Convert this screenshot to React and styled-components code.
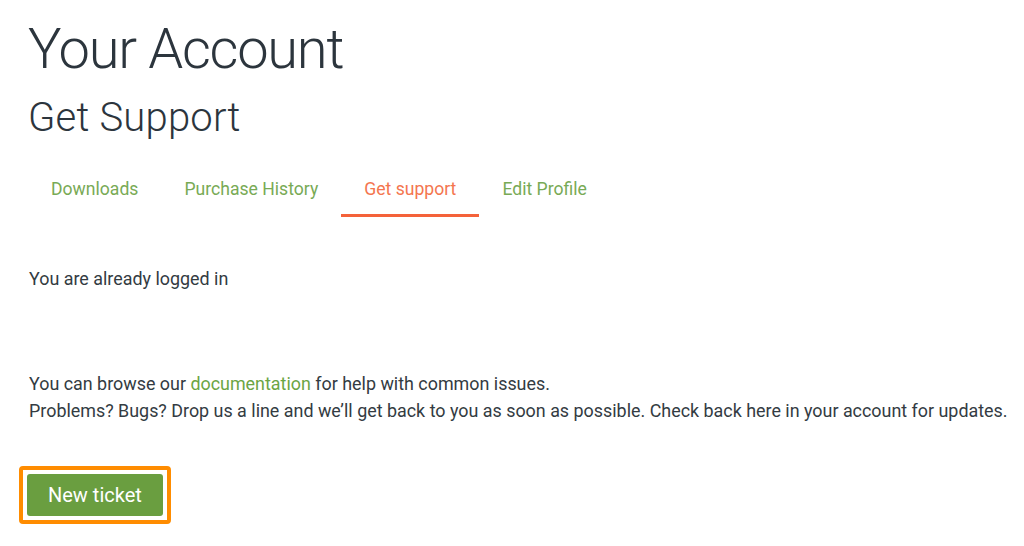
import styled, { createGlobalStyle } from "styled-components";

const GlobalStyle = createGlobalStyle`
    body {
        margin: 0;
        background: #ffffff;
        font-family: Roboto, "Liberation Sans", sans-serif;
        color: #333b42;
    }
`;

const tabs = ["Downloads", "Purchase History", "Get support", "Edit Profile"];

export default function App() {
    return (
        <>
            <GlobalStyle />
            <Page>
                <Title>Your Account</Title>
                <Subtitle>Get Support</Subtitle>
                <TabBar>
                    {tabs.map((tab) => (
                        <Tab key={tab} $active={tab === "Get support"}>
                            {tab}
                        </Tab>
                    ))}
                </TabBar>
                <Notice>You are already logged in</Notice>
                <Text>
                    You can browse our <Link href="#">documentation</Link> for
                    help with common issues.
                    <br />
                    Problems? Bugs? Drop us a line and we’ll get back to you as
                    soon as possible. Check back here in your account for
                    updates.
                </Text>
                <ButtonFrame>
                    <Button type="button">New ticket</Button>
                </ButtonFrame>
            </Page>
        </>
    );
}

const Page = styled.div`
    padding: 16px 0 0 29px;
    display: flex;
    flex-direction: column;
    align-items: flex-start;
`;

const Title = styled.h1`
    margin: 0 0 0 -1px;
    font-size: 56px;
    font-weight: 300;
    line-height: 67px;
    letter-spacing: -1.25px;
    color: #2c353d;
`;

const Subtitle = styled.h2`
    margin: 11px 0 0 -1px;
    font-size: 40px;
    font-weight: 300;
    line-height: 48px;
    letter-spacing: 0.2px;
    color: #2c353d;
`;

const TabBar = styled.nav`
    display: flex;
    margin: 33px 0 0 -1px;
`;

const Tab = styled.a`
    padding: 0 23px;
    height: 39px;
    font-size: 17.6px;
    line-height: 28px;
    color: ${(props) => (props.$active ? "#f4764f" : "#78aa55")};
    border-bottom: 3px solid
        ${(props) => (props.$active ? "#f4623a" : "transparent")};
    cursor: pointer;
`;

const Notice = styled.p`
    margin: 48px 0 0;
    font-size: 17.9px;
    line-height: 27px;
`;

const Text = styled.p`
    margin: 78px 0 0;
    font-size: 17.9px;
    line-height: 27px;
`;

const Link = styled.a`
    color: #6ba544;
    text-decoration: none;
`;

const ButtonFrame = styled.div`
    margin: 42px 0 0 -10px;
    padding: 4px;
    border: 4px solid #ff8c00;
    border-radius: 4px;
`;

const Button = styled.button`
    display: block;
    border: none;
    border-radius: 3px;
    background: #6a9e40;
    color: #ffffff;
    font-family: Roboto, "Liberation Sans", sans-serif;
    font-size: 20px;
    padding: 0 21px;
    height: 42px;
    cursor: pointer;
`;
